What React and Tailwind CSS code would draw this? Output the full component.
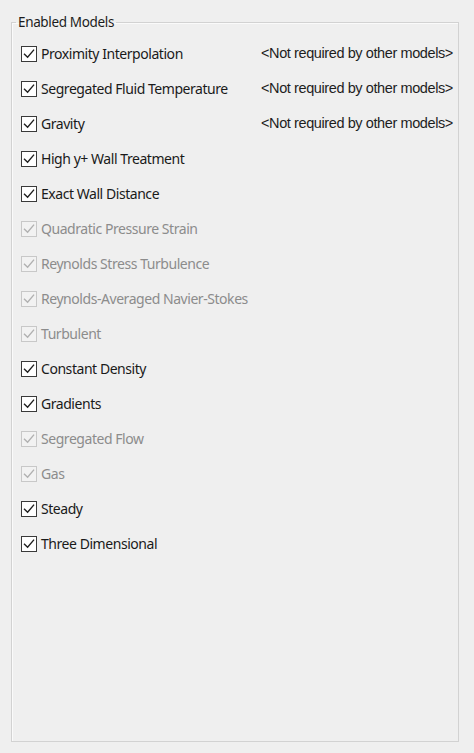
import React from 'react';

const models = [
    { label: 'Proximity Interpolation', note: '<Not required by other models>', enabled: true },
    { label: 'Segregated Fluid Temperature', note: '<Not required by other models>', enabled: true },
    { label: 'Gravity', note: '<Not required by other models>', enabled: true },
    { label: 'High y+ Wall Treatment', enabled: true },
    { label: 'Exact Wall Distance', enabled: true },
    { label: 'Quadratic Pressure Strain', enabled: false },
    { label: 'Reynolds Stress Turbulence', enabled: false },
    { label: 'Reynolds-Averaged Navier-Stokes', enabled: false },
    { label: 'Turbulent', enabled: false },
    { label: 'Constant Density', enabled: true },
    { label: 'Gradients', enabled: true },
    { label: 'Segregated Flow', enabled: false },
    { label: 'Gas', enabled: false },
    { label: 'Steady', enabled: true },
    { label: 'Three Dimensional', enabled: true },
];

const CheckBox = ({ enabled }) => (
    <div
        className={
            enabled
                ? 'w-[16px] h-[16px] border-[1.5px] border-[#3a3a3a] bg-white flex items-center justify-center shrink-0'
                : 'w-[16px] h-[16px] border border-[#c8c8c8] bg-[#f2f2f2] flex items-center justify-center shrink-0'
        }
    >
        <svg width="12" height="12" viewBox="0 0 12 12" fill="none">
            <path
                d="M1.5 6.2 L4.6 9.3 L10.6 2.2"
                stroke={enabled ? '#1e1e1e' : '#b0b0b0'}
                strokeWidth="1.4"
                strokeLinecap="square"
            />
        </svg>
    </div>
);

export default function App() {
    return (
        <div className="w-[474px] h-[753px] bg-[#efefef] pt-[14px] pl-[11px]" style={{ fontFamily: '"Noto Sans", "Open Sans", sans-serif' }}>
            <fieldset className="w-[448px] h-[728px] border border-[#d2d2d2] shadow-[inset_1px_1px_0_#fafafa]">
                <legend className="ml-[4px] px-[2px] text-[13.5px] leading-[16px] text-[#1c1c1c] tracking-[-0.35px]">
                    Enabled Models
                </legend>
                <div className="flex flex-col pt-[6px] pl-[9px]">
                    {models.map((m) => (
                        <div key={m.label} className="h-[35px] flex items-center">
                            <CheckBox enabled={m.enabled} />
                            <span
                                className={
                                    m.enabled
                                        ? 'ml-[4px] w-[220px] text-[14px] text-[#1a1a1a] tracking-[-0.45px] whitespace-nowrap'
                                        : 'ml-[4px] w-[220px] text-[14px] text-[#8c8c8c] tracking-[-0.45px] whitespace-nowrap'
                                }
                            >
                                {m.label}
                            </span>
                            {m.note && (
                                <span
                                    className="text-[14.5px] text-[#1e1e1e] tracking-[-0.4px] whitespace-nowrap"
                                    style={{ fontFamily: '"Liberation Sans", Arial, sans-serif' }}
                                >
                                    {m.note}
                                </span>
                            )}
                        </div>
                    ))}
                </div>
            </fieldset>
        </div>
    );
}
